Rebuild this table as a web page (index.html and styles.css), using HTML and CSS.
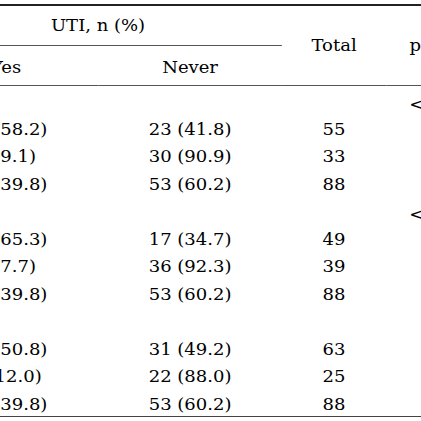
FILE: index.html
```html
<!DOCTYPE html>
<html lang="en">
<head>
    <meta charset="UTF-8">
    <meta name="viewport" content="width=device-width, initial-scale=1.0">
    <title>UTI by group</title>
    <link rel="stylesheet" href="styles.css">
</head>
<body>
    <div class="table-wrap">
        <table class="uti-table">
            <colgroup>
                <col class="col-yes">
                <col class="col-never">
                <col class="col-total">
                <col class="col-p">
            </colgroup>
            <thead>
                <tr class="head-top">
                    <th colspan="2" class="span-head">UTI, n (%)</th>
                    <th rowspan="2" class="rule">Total</th>
                    <th rowspan="2" class="rule">p value</th>
                </tr>
                <tr class="head-sub">
                    <th class="rule">Yes</th>
                    <th class="rule">Never</th>
                </tr>
            </thead>
            <tbody>
                <!-- Group 1 -->
                <tr class="group-row"><td></td><td></td><td></td><td>&lt;0.001</td></tr>
                <tr><td>32 (58.2)</td><td>23 (41.8)</td><td>55</td><td></td></tr>
                <tr><td>3 (9.1)</td><td>30 (90.9)</td><td>33</td><td></td></tr>
                <tr><td>35 (39.8)</td><td>53 (60.2)</td><td>88</td><td></td></tr>

                <!-- Group 2 -->
                <tr class="group-row"><td></td><td></td><td></td><td>&lt;0.001</td></tr>
                <tr><td>32 (65.3)</td><td>17 (34.7)</td><td>49</td><td></td></tr>
                <tr><td>3 (7.7)</td><td>36 (92.3)</td><td>39</td><td></td></tr>
                <tr><td>35 (39.8)</td><td>53 (60.2)</td><td>88</td><td></td></tr>

                <!-- Group 3 -->
                <tr class="group-row"><td></td><td></td><td></td><td></td></tr>
                <tr><td>32 (50.8)</td><td>31 (49.2)</td><td>63</td><td></td></tr>
                <tr><td>3 (12.0)</td><td>22 (88.0)</td><td>25</td><td></td></tr>
                <tr><td>35 (39.8)</td><td>53 (60.2)</td><td>88</td><td></td></tr>
            </tbody>
        </table>
    </div>
</body>
</html>
```

FILE: styles.css
```css
html,
body {
    margin: 0;
    background-color: white;
    overflow: hidden;
}

.table-wrap {
    width: 520px;
    margin-left: -86px;
    padding-top: 4px;
    transform: scaleX(1.125);
    transform-origin: 0 0;
}

.uti-table {
    width: 520px;
    table-layout: fixed;
    border-collapse: separate;
    border-spacing: 0;
    border-top: 2px solid #222;
    border-bottom: 1.5px solid #444;
    font-family: 'DejaVu Serif', serif;
    font-size: 16px;
    color: #000;
}

.col-yes,
.col-never {
    width: 163.6px;
}

.col-total {
    width: 92.4px;
}

.col-p {
    width: 100.4px;
}

.uti-table th,
.uti-table td {
    padding: 0;
    text-align: center;
    vertical-align: middle;
    font-weight: normal;
    white-space: nowrap;
}

.head-top,
.head-sub {
    height: 40px;
}

.head-sub th {
    padding-top: 3px;
}

.span-head,
.rule {
    border-bottom: 1px solid #555;
}

.uti-table tbody tr {
    height: 27.5px;
}

.uti-table tbody td {
    padding-top: 4px;
}

/* p values sit low in the group heading row */
.group-row td {
    vertical-align: bottom;
    padding-top: 0;
    line-height: 18px;
}
```
